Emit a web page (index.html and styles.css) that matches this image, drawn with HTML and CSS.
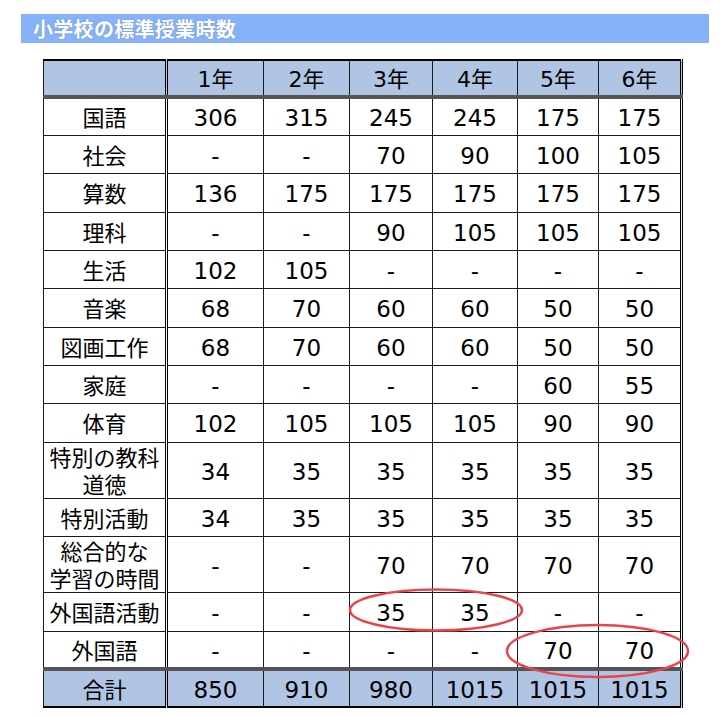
FILE: index.html
```html
<!DOCTYPE html>
<html lang="ja">
<head>
<meta charset="utf-8">
<title>小学校の標準授業時数</title>
<link rel="stylesheet" href="styles.css">
</head>
<body>
<div class="page">
  <div class="title">小学校の標準授業時数</div>
  <div class="table-wrap">
    <table class="hours">
      <colgroup>
        <col class="c-label"><col class="c1"><col class="c2"><col class="c3"><col class="c4"><col class="c5"><col class="c6">
      </colgroup>
      <thead>
        <tr class="head"><th class="label"></th><th>1年</th><th>2年</th><th>3年</th><th>4年</th><th>5年</th><th>6年</th></tr>
      </thead>
      <tbody>
        <tr class="r38"><th class="label">国語</th><td>306</td><td>315</td><td>245</td><td>245</td><td>175</td><td>175</td></tr>
        <tr class="r38"><th class="label">社会</th><td>-</td><td>-</td><td>70</td><td>90</td><td>100</td><td>105</td></tr>
        <tr class="r39"><th class="label">算数</th><td>136</td><td>175</td><td>175</td><td>175</td><td>175</td><td>175</td></tr>
        <tr class="r38"><th class="label">理科</th><td>-</td><td>-</td><td>90</td><td>105</td><td>105</td><td>105</td></tr>
        <tr class="r38"><th class="label">生活</th><td>102</td><td>105</td><td>-</td><td>-</td><td>-</td><td>-</td></tr>
        <tr class="r39"><th class="label">音楽</th><td>68</td><td>70</td><td>60</td><td>60</td><td>50</td><td>50</td></tr>
        <tr class="r38"><th class="label">図画工作</th><td>68</td><td>70</td><td>60</td><td>60</td><td>50</td><td>50</td></tr>
        <tr class="r38"><th class="label">家庭</th><td>-</td><td>-</td><td>-</td><td>-</td><td>60</td><td>55</td></tr>
        <tr class="r39"><th class="label">体育</th><td>102</td><td>105</td><td>105</td><td>105</td><td>90</td><td>90</td></tr>
        <tr class="r56"><th class="label two"><span class="ln">特別の教科</span><span class="ln">道徳</span></th><td>34</td><td>35</td><td>35</td><td>35</td><td>35</td><td>35</td></tr>
        <tr class="r38"><th class="label">特別活動</th><td>34</td><td>35</td><td>35</td><td>35</td><td>35</td><td>35</td></tr>
        <tr class="r56"><th class="label two"><span class="ln">総合的な</span><span class="ln">学習の時間</span></th><td>-</td><td>-</td><td>70</td><td>70</td><td>70</td><td>70</td></tr>
        <tr class="r39"><th class="label">外国語活動</th><td>-</td><td>-</td><td>35</td><td>35</td><td>-</td><td>-</td></tr>
        <tr class="r38"><th class="label">外国語</th><td>-</td><td>-</td><td>-</td><td>-</td><td>70</td><td>70</td></tr>
      </tbody>
      <tfoot>
        <tr class="total"><th class="label">合計</th><td>850</td><td>910</td><td>980</td><td>1015</td><td>1015</td><td>1015</td></tr>
      </tfoot>
    </table>
    <svg class="marks" width="640" height="647" viewBox="0 0 640 647" aria-hidden="true">
      <ellipse cx="393" cy="551" rx="86" ry="20.5" />
      <ellipse cx="554.5" cy="592" rx="90.5" ry="26" />
    </svg>
  </div>
</div>
</body>
</html>
```
FILE: styles.css
```css
html, body {
  margin: 0;
  padding: 0;
  background: #ffffff;
}

body {
  font-family: "Noto Sans CJK JP", "Noto Sans", sans-serif;
  color: #000;
}

.page {
  padding: 14px 0 0 21px;
}

.title {
  width: 688px;
  height: 29px;
  box-sizing: border-box;
  background: #85b2f8;
  color: #ffffff;
  font-weight: bold;
  font-size: 20px;
  line-height: 29px;
  padding-left: 12px;
  letter-spacing: 0.3px;
  text-shadow: 0 0 1px rgba(60, 80, 120, 0.5);
}

.table-wrap {
  position: relative;
  margin: 16px 0 0 22px;
  width: 640px;
}

.hours {
  border-collapse: collapse;
  table-layout: fixed;
  width: 640px;
  border-top: 2px solid #000;
  border-left: 1px solid #000;
  border-bottom: 2px solid #000;
  border-right: 3px double #000;
  font-family: "DejaVu Sans", "Noto Sans CJK JP", sans-serif;
}

.c-label { width: 123px; }
.c1 { width: 97px; }
.c2 { width: 86px; }
.c3 { width: 83px; }
.c4 { width: 85px; }
.c5 { width: 81px; }
.c6 { width: 83px; }

.hours th,
.hours td {
  border: 1px solid #1a1a1a;
  padding: 0;
  text-align: center;
  vertical-align: middle;
  font-weight: normal;
}

.hours td {
  font-size: 23px;
  line-height: 28px;
  padding-top: 3px;
}

.hours th {
  font-size: 22px;
  line-height: 27px;
  padding-top: 2px;
}

.hours .label {
  font-family: "Noto Sans CJK JP", sans-serif;
  font-size: 22px;
  padding-top: 0;
  border-right: 3px double #000;
}

.two .ln {
  display: block;
  height: 27px;
  line-height: 27px;
}

.head th {
  background: #b0c4e4;
  height: 32px;
  border-bottom: 4px solid #555;
}

.r38 { height: 38px; }
.r39 { height: 39px; }
.r56 { height: 56px; }

.total th,
.total td {
  background: #b0c4e4;
  height: 32px;
  border-top: 4px solid #555;
}

.marks {
  position: absolute;
  left: 0;
  top: 0;
  overflow: visible;
  pointer-events: none;
}

.marks ellipse {
  fill: none;
  stroke: #ea4448;
  stroke-width: 2.5;
}
```
